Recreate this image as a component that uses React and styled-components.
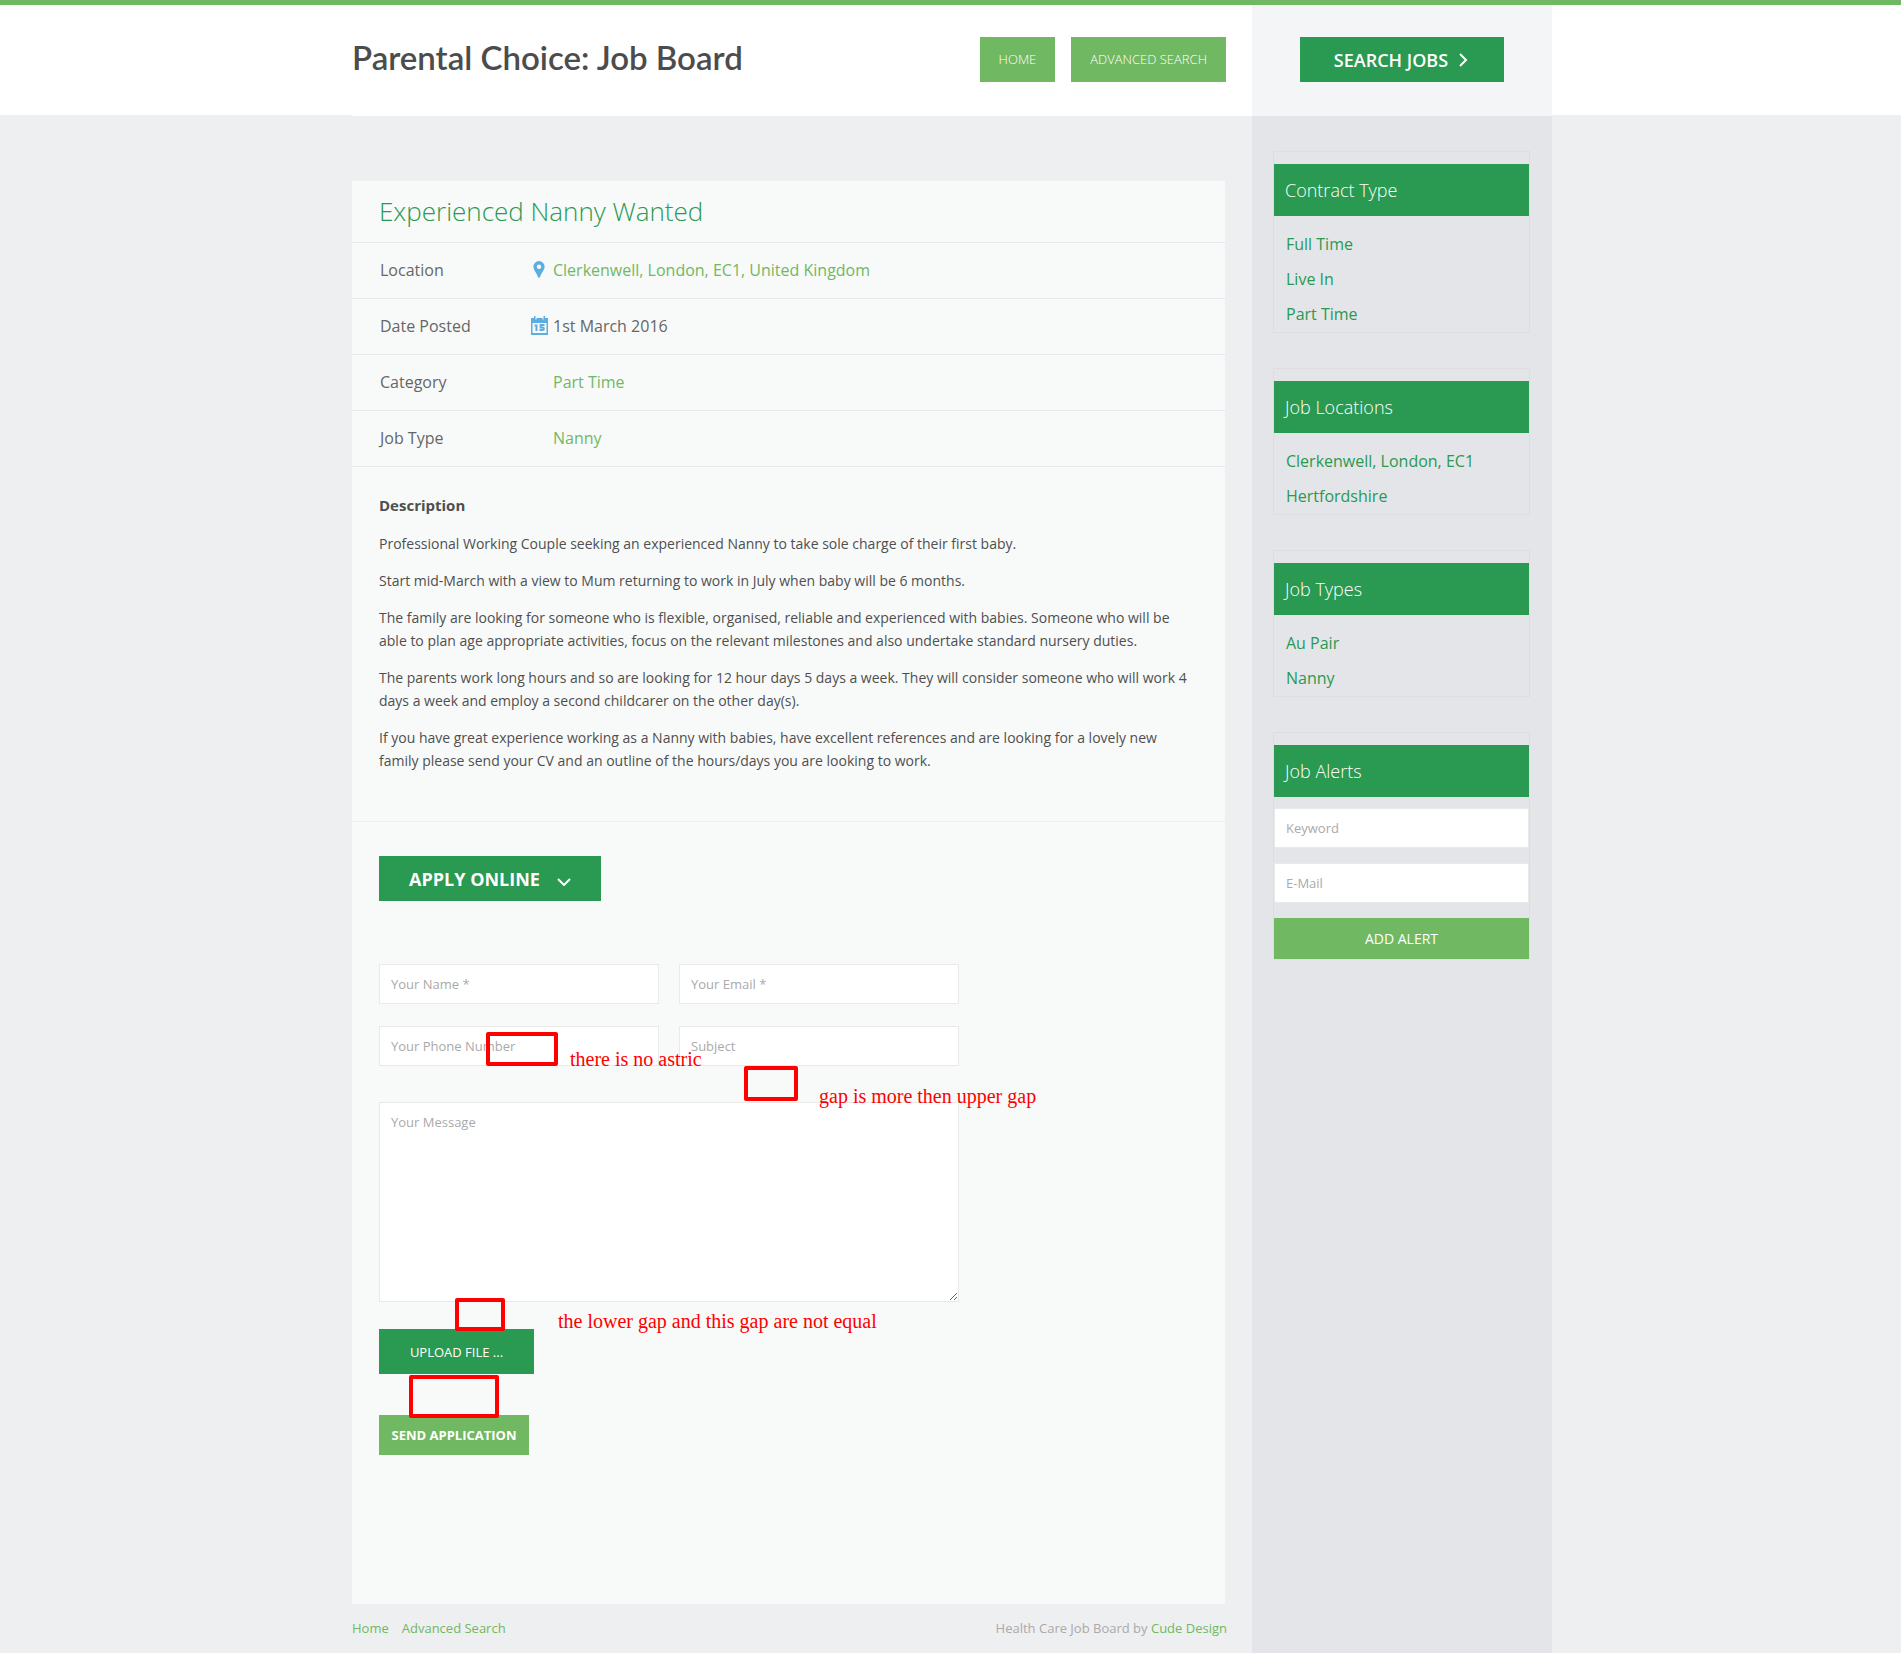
import React from "react";
import styled, { createGlobalStyle, css } from "styled-components";

const color = {
  leaf: "#70b862",
  forest: "#2a9951",
  page: "#eeeff1",
  side: "#e4e5e9",
  sideHead: "#f4f5f7",
  card: "#f8faf9",
  rule: "#e6e8ec",
  text: "#4f4f4f",
  label: "#666666",
  muted: "#aaaaaa",
  note: "#ff0000",
};

const GlobalStyle = createGlobalStyle`
  *, *::before, *::after { box-sizing: border-box; }
  html { background: ${color.page}; }
  body {
    margin: 0;
    font: 400 14px/23px "Open Sans", sans-serif;
    color: ${color.text};
  }
  a { text-decoration: none; }
  h1, h2, h3, p, ul, dl, dd { margin: 0; padding: 0; }
  input, textarea, button { font-family: inherit; margin: 0; border-radius: 0; }
`;

const Page = styled.div`
  min-height: 100vh;
  border-top: 5px solid ${color.leaf};
  padding-left: 3px;
  background: linear-gradient(#ffffff 110px, ${color.page} 110px);
  display: flex;
  justify-content: center;
`;

const Columns = styled.div`
  width: 100%;
  max-width: 1200px;
  display: grid;
  grid-template-columns: minmax(0, 1fr) 300px;
`;

const Primary = styled.div`
  display: flex;
  flex-direction: column;
`;

const Header = styled.header`
  height: 111px;
  padding-right: 26px;
  background: #ffffff;
  display: flex;
  align-items: flex-start;
  justify-content: space-between;
`;

const Brand = styled.h1`
  padding-top: 32px;
  font: 600 33px/40px Lato, sans-serif;
  color: #4c4c4c;
`;

const Nav = styled.nav`
  display: flex;
  gap: 16px;
  padding-top: 32px;
`;

const solid = css`
  display: inline-flex;
  align-items: center;
  justify-content: center;
  border: 0;
  color: #ffffff;
  text-transform: uppercase;
  cursor: pointer;
`;

const NavLink = styled.a`
  ${solid}
  height: 45px;
  padding: 0 19px;
  background: ${color.leaf};
  font-size: 13px;
  font-weight: 300;
`;

const Card = styled.main`
  margin: 65px 27px 0 0;
  padding-bottom: 149px;
  background: ${color.card};
`;

const JobTitle = styled.h2`
  padding: 10px 27px 11px;
  font-size: 26px;
  line-height: 40px;
  font-weight: 300;
  color: ${color.forest};
`;

const Facts = styled.dl`
  border-bottom: 1px solid ${color.rule};
`;

const Fact = styled.div`
  height: 56px;
  padding: 0 28px;
  border-top: 1px solid ${color.rule};
  display: grid;
  grid-template-columns: 150px 23px 1fr;
  align-items: center;
  font-size: 16px;
  color: ${color.label};

  dd a { color: ${color.leaf}; }
`;

const FactIcon = styled.span`
  display: flex;
  justify-content: center;
  width: 18px;
  padding-bottom: 2px;
`;

const Description = styled.section`
  padding: 26px 27px 49px;
  border-bottom: 1px solid #eef0f0;
  display: flex;
  flex-direction: column;
  gap: 14px;

  h3 {
    padding-bottom: 1px;
    font-size: 15px;
    line-height: 24px;
    font-weight: 700;
  }
`;

const Apply = styled.section`
  padding: 34px 27px 0;
`;

const BigButton = styled.button`
  ${solid}
  height: 45px;
  width: ${(p) => p.$width};
  gap: ${(p) => p.$gap};
  background: ${color.forest};
  font-size: 18px;
  font-weight: ${(p) => p.$weight};
`;

const Form = styled.form`
  position: relative;
  max-width: 580px;
  margin-top: 63px;
  display: flex;
  flex-direction: column;
  align-items: flex-start;
`;

const FieldGrid = styled.div`
  width: 100%;
  display: grid;
  grid-template-columns: 1fr 1fr;
  gap: 22px 20px;
`;

const field = css`
  display: block;
  width: 100%;
  padding: 0 11px;
  border: 1px solid #e8eaea;
  background: #ffffff;
  color: ${color.text};
  font-size: 13px;
  outline: 0;

  &::placeholder { color: ${color.muted}; opacity: 1; }
`;

const TextField = styled.input`
  ${field}
  height: 40px;
`;

const Message = styled.textarea`
  ${field}
  height: 200px;
  margin-top: 36px;
  padding-top: 9px;
  line-height: 20px;
  resize: vertical;
`;

const UploadButton = styled.button`
  ${solid}
  width: 155px;
  height: 45px;
  margin-top: 27px;
  background: ${color.forest};
  font-size: 13px;
`;

const SendButton = styled.button`
  ${solid}
  width: 150px;
  height: 40px;
  margin-top: 41px;
  background: ${color.leaf};
  font-size: 13px;
  font-weight: 700;
`;

const Mark = styled.span`
  position: absolute;
  left: ${(p) => p.$x}px;
  top: ${(p) => p.$y}px;
  width: ${(p) => p.$w}px;
  height: ${(p) => p.$h}px;
  border: 4px solid ${color.note};
  border-radius: 2px;
  pointer-events: none;
`;

const Note = styled.span`
  position: absolute;
  left: ${(p) => p.$x}px;
  top: ${(p) => p.$y}px;
  font: 20px/22px "Liberation Serif", serif;
  color: ${color.note};
  white-space: nowrap;
  pointer-events: none;
`;

const Footer = styled.footer`
  display: flex;
  justify-content: space-between;
  padding: 13px 25px 13px 0;
  font-size: 13px;
  color: ${color.muted};

  a { color: ${color.leaf}; }
`;

const FooterLinks = styled.nav`
  display: flex;
  gap: 13px;
`;

const Aside = styled.aside`
  background: ${color.side};
`;

const AsideTop = styled.div`
  height: 111px;
  padding-top: 32px;
  background: ${color.sideHead};
  display: flex;
  justify-content: center;
  align-items: flex-start;
`;

const Widgets = styled.div`
  padding: 35px 22px 35px 21px;
  display: flex;
  flex-direction: column;
  gap: 35px;
`;

const Widget = styled.section`
  padding-top: 12px;
  border: 1px solid #dddee0;

  h3 {
    padding: 0 11px;
    background: ${color.forest};
    color: #ffffff;
    font-size: 18px;
    line-height: 52px;
    font-weight: 300;
  }
`;

const LinkList = styled.ul`
  padding: 11px 12px 0;
  list-style: none;
  font-size: 16px;
  line-height: 35px;

  a { color: ${color.forest}; }
`;

const AlertForm = styled.form`
  padding-top: 11px;
  display: flex;
  flex-direction: column;
  gap: 15px;
`;

const AlertButton = styled.button`
  ${solid}
  height: 41px;
  background: ${color.leaf};
  font-size: 14px;
`;

const PinIcon = () => (
  <svg width="12" height="17" viewBox="0 0 12 17" aria-hidden="true">
    <path
      fill="#5dade2"
      fillRule="evenodd"
      d="M6 0a5.600 5.600 0 0 0-5.600 5.600C.4 9.500 4 12 5 16.500h2C8 12 11.600 9.500 11.600 5.600A5.600 5.600 0 0 0 6 0Zm0 3.500a2.200 2.200 0 1 1 0 4.400 2.200 2.200 0 0 1 0-4.400Z"
    />
  </svg>
);

const CalendarIcon = () => (
  <svg width="17" height="19" viewBox="0 0 17 19" aria-hidden="true">
    <path
      fill="#5dade2"
      fillRule="evenodd"
      d="M0 2h3V0h1.500v3.500h1V2h6v1.500h1V0H14v2h3v17H0V2Zm1.500 5v10h14V7h-14Z"
    />
    <path
      fill="none"
      stroke="#5dade2"
      strokeWidth="2"
      d="M3.500 9.500h2V15M13.500 9H9.600v2.500h1.700q1.600 0 1.600 1.300t-1.600 1.300H8.500"
    />
  </svg>
);

const ChevronIcon = ({ down }) => (
  <svg width="14" height="14" viewBox="0 0 14 14" aria-hidden="true">
    <path
      fill="none"
      stroke="#ffffff"
      strokeWidth="2"
      d={down ? "M1 7l6 6 6-6" : "M4 1l6 6-6 6"}
    />
  </svg>
);

const facts = [
  { label: "Location", value: "Clerkenwell, London, EC1, United Kingdom", link: true, icon: <PinIcon /> },
  { label: "Date Posted", value: "1st March 2016", icon: <CalendarIcon /> },
  { label: "Category", value: "Part Time", link: true },
  { label: "Job Type", value: "Nanny", link: true },
];

const paragraphs = [
  "Professional Working Couple seeking an experienced Nanny to take sole charge of their first baby.",
  "Start mid-March with a view to Mum returning to work in July when baby will be 6 months.",
  "The family are looking for someone who is flexible, organised, reliable and experienced with babies. Someone who will be able to plan age appropriate activities, focus on the relevant milestones and also undertake standard nursery duties.",
  "The parents work long hours and so are looking for 12 hour days 5 days a week. They will consider someone who will work 4 days a week and employ a second childcarer on the other day(s).",
  "If you have great experience working as a Nanny with babies, have excellent references and are looking for a lovely new family please send your CV and an outline of the hours/days you are looking to work.",
];

const fields = [
  { label: "Your Name *", type: "text" },
  { label: "Your Email *", type: "email" },
  { label: "Your Phone Number", type: "tel" },
  { label: "Subject", type: "text" },
];

const lists = [
  { title: "Contract Type", items: ["Full Time", "Live In", "Part Time"] },
  { title: "Job Locations", items: ["Clerkenwell, London, EC1", "Hertfordshire"] },
  { title: "Job Types", items: ["Au Pair", "Nanny"] },
];

const marks = [
  { x: 107, y: 68, w: 72, h: 34 },
  { x: 365, y: 102, w: 54, h: 35 },
  { x: 76, y: 334, w: 50, h: 33 },
  { x: 30, y: 411, w: 90, h: 43 },
];

const notes = [
  { x: 191, y: 84, text: "there is no astric" },
  { x: 440, y: 121, text: "gap is more then upper gap" },
  { x: 179, y: 346, text: "the lower gap and this gap are not equal" },
];

export default function App() {
  return (
    <>
      <GlobalStyle />
      <Page>
        <Columns>
          <Primary>
            <Header>
              <Brand>Parental Choice: Job Board</Brand>
              <Nav>
                <NavLink href="#home">Home</NavLink>
                <NavLink href="#advanced">Advanced Search</NavLink>
              </Nav>
            </Header>
            <Card>
              <JobTitle>Experienced Nanny Wanted</JobTitle>
              <Facts>
                {facts.map((f) => (
                  <Fact key={f.label}>
                    <dt>{f.label}</dt>
                    <FactIcon>{f.icon}</FactIcon>
                    <dd>{f.link ? <a href="#jobs">{f.value}</a> : f.value}</dd>
                  </Fact>
                ))}
              </Facts>
              <Description>
                <h3>Description</h3>
                {paragraphs.map((p) => (
                  <p key={p}>{p}</p>
                ))}
              </Description>
              <Apply>
                <BigButton type="button" $width="222px" $gap="17px" $weight={700}>
                  Apply Online
                  <ChevronIcon down />
                </BigButton>
                <Form onSubmit={(e) => e.preventDefault()}>
                  <FieldGrid>
                    {fields.map((f) => (
                      <TextField key={f.label} type={f.type} placeholder={f.label} aria-label={f.label} />
                    ))}
                  </FieldGrid>
                  <Message placeholder="Your Message" aria-label="Your Message" />
                  <UploadButton type="button">Upload File ...</UploadButton>
                  <SendButton type="submit">Send Application</SendButton>
                  {marks.map((m) => (
                    <Mark key={m.y} $x={m.x} $y={m.y} $w={m.w} $h={m.h} />
                  ))}
                  {notes.map((n) => (
                    <Note key={n.text} $x={n.x} $y={n.y}>{n.text}</Note>
                  ))}
                </Form>
              </Apply>
            </Card>
            <Footer>
              <FooterLinks>
                <a href="#home">Home</a>
                <a href="#advanced">Advanced Search</a>
              </FooterLinks>
              <p>
                Health Care Job Board by <a href="#cude">Cude Design</a>
              </p>
            </Footer>
          </Primary>
          <Aside>
            <AsideTop>
              <BigButton type="button" $width="204px" $gap="8px" $weight={600}>
                Search Jobs
                <ChevronIcon />
              </BigButton>
            </AsideTop>
            <Widgets>
              {lists.map((l) => (
                <Widget key={l.title}>
                  <h3>{l.title}</h3>
                  <LinkList>
                    {l.items.map((i) => (
                      <li key={i}>
                        <a href="#jobs">{i}</a>
                      </li>
                    ))}
                  </LinkList>
                </Widget>
              ))}
              <Widget>
                <h3>Job Alerts</h3>
                <AlertForm onSubmit={(e) => e.preventDefault()}>
                  <TextField type="text" placeholder="Keyword" aria-label="Keyword" />
                  <TextField type="email" placeholder="E-Mail" aria-label="E-Mail" />
                  <AlertButton type="submit">Add Alert</AlertButton>
                </AlertForm>
              </Widget>
            </Widgets>
          </Aside>
        </Columns>
      </Page>
    </>
  );
}
